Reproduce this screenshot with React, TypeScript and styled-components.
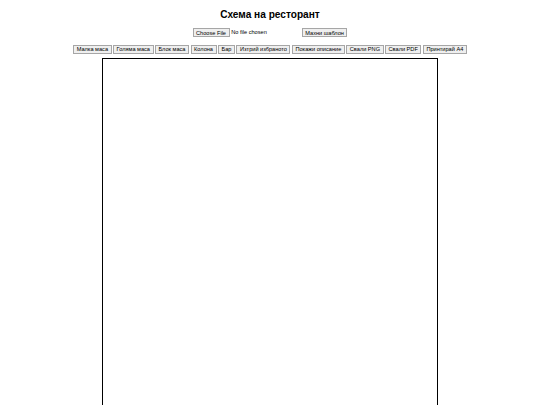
import React from "react";
import styled, { createGlobalStyle } from "styled-components";

const GlobalStyle = createGlobalStyle`
  html, body {
    margin: 0;
    padding: 0;
    background: #ffffff;
  }
  body {
    font-family: "Liberation Sans", Arial, sans-serif;
    color: #000000;
    overflow: hidden;
  }
`;

const Page = styled.div`
  zoom: 0.421875;
  width: 1280px;
  display: flex;
  flex-direction: column;
  align-items: center;
  padding-top: 22px;
  font-family: "Liberation Sans", Arial, sans-serif;
`;

const Title = styled.h1`
  margin: 0;
  font-size: 24px;
  line-height: 28px;
  font-weight: bold;
  text-align: center;
`;

const FileRow = styled.div`
  margin-top: 17px;
  display: flex;
  align-items: center;
  gap: 6px;
`;

const FileInput = styled.input`
  font-family: "Liberation Sans", Arial, sans-serif;
  font-size: 13.333px;
  width: 253px;

  &::file-selector-button {
    font-family: "Liberation Sans", Arial, sans-serif;
    font-size: 13.333px;
    background: #efefef;
    border: 1px solid #a6a6a6;
    border-radius: 0;
    padding: 1px 6px;
    margin-right: 4px;
    color: #000000;
  }
`;

const Toolbar = styled.div`
  margin-top: 18px;
  display: flex;
  flex-wrap: wrap;
  justify-content: center;
  gap: 3.5px;
`;

const Button = styled.button`
  font-family: "Liberation Sans", Arial, sans-serif;
  font-size: 13.333px;
  padding: 1px 6px;
  background: #efefef;
  border: 1px solid #a6a6a6;
  border-radius: 0;
  color: #000000;
  line-height: normal;
`;

const Sheet = styled.div`
  margin-top: 10px;
  width: 794px;
  height: 1123px;
  border: 2px solid #000000;
  background: #ffffff;
  flex-shrink: 0;
`;

const tools = [
  "Малка маса",
  "Голяма маса",
  "Блок маса",
  "Колона",
  "Бар",
  "Изтрий избраното",
  "Покажи описание",
  "Свали PNG",
  "Свали PDF",
  "Принтирай А4",
];

export default function App() {
  return (
    <>
      <GlobalStyle />
      <Page>
        <Title>Схема на ресторант</Title>
        <FileRow>
          <FileInput type="file" />
          <Button type="button">Махни шаблон</Button>
        </FileRow>
        <Toolbar>
          {tools.map((t) => (
            <Button key={t} type="button">
              {t}
            </Button>
          ))}
        </Toolbar>
        <Sheet />
      </Page>
    </>
  );
}
